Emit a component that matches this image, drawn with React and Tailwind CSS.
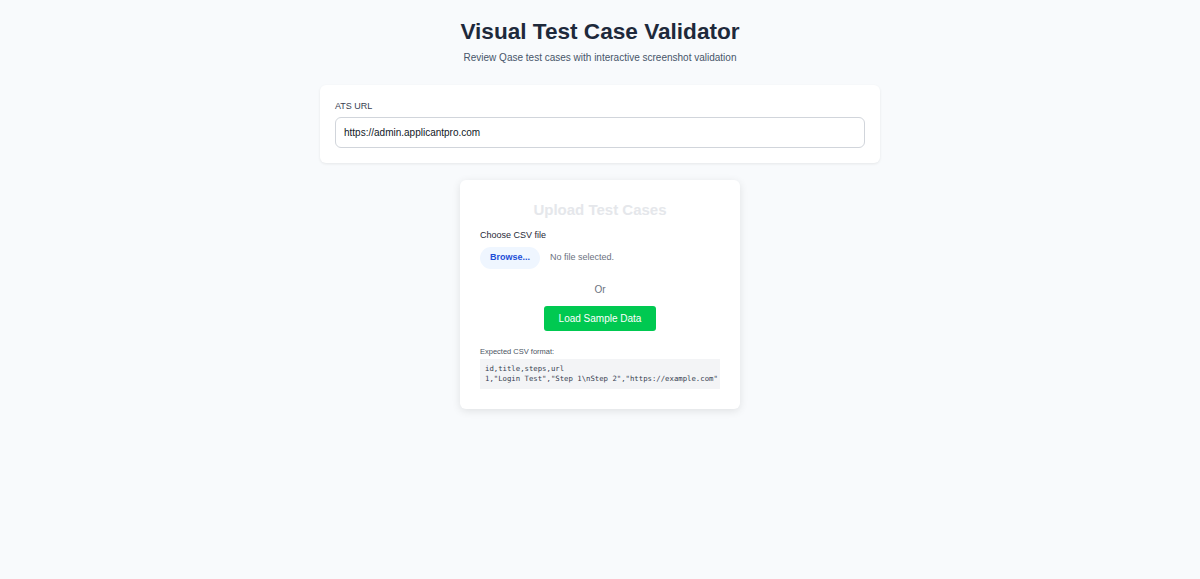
import { useState } from 'react'

const sampleCsv = `id,title,steps,url
1,"Login Test","Step 1\\nStep 2","https://example.com"`

export default function App() {
  const [atsUrl, setAtsUrl] = useState('https://admin.applicantpro.com')

  return (
    <div className="min-h-screen bg-[#f8fafc] font-['Liberation_Sans',Arial,sans-serif]">
      <div className="flex flex-col items-center pt-[18px]">
        <h1 className="text-[22.6px] font-bold leading-[28px] text-[#1e293b]">Visual Test Case Validator</h1>
        <p className="mt-[5px] text-[10px] leading-[13px] text-[#475569]">
          Review Qase test cases with interactive screenshot validation
        </p>

        <div className="mt-[21px] w-[560px] rounded-md bg-white p-[15px] shadow-[0_1px_3px_rgba(0,0,0,0.08)]">
          <label className="block text-[9px] leading-[12px] text-[#374151]">ATS URL</label>
          <input
            value={atsUrl}
            onChange={(e) => setAtsUrl(e.target.value)}
            className="mt-[5px] block h-[31px] w-full rounded-md border border-[#d1d5db] px-[8px] text-[10px] text-[#111827] outline-none"
          />
        </div>

        <div className="mt-[17px] w-[280px] rounded-md bg-white p-[20px] shadow-[0_2px_8px_rgba(0,0,0,0.1)]">
          <h2 className="text-center text-[15px] font-bold leading-[20px] text-[#e5e7eb]">Upload Test Cases</h2>

          <div className="mt-[9px] text-[9px] leading-[12px] text-[#1f2937]">Choose CSV file</div>
          <div className="mt-[6px] flex items-center gap-[10px]">
            <button className="h-[22px] w-[60px] rounded-full bg-[#eff6ff] text-[9px] font-bold text-[#1d4ed8]">
              Browse...
            </button>
            <span className="text-[9px] text-[#6b7280]">No file selected.</span>
          </div>

          <div className="mt-[15px] text-center text-[10px] leading-[12px] text-[#6b7280]">Or</div>
          <div className="mt-[10px] flex justify-center">
            <button className="h-[25px] w-[112px] rounded-[3px] bg-[#00c951] text-[10px] text-white">
              Load Sample Data
            </button>
          </div>

          <div className="mt-[16px] text-[7.5px] leading-[10px] text-[#4b5563]">Expected CSV format:</div>
          <pre className="mt-[2px] bg-[#f3f4f6] px-[5px] py-[5px] font-['DejaVu_Sans_Mono',monospace] text-[7.3px] leading-[10px] text-[#374151]">
            {sampleCsv}
          </pre>
        </div>
      </div>
    </div>
  )
}
